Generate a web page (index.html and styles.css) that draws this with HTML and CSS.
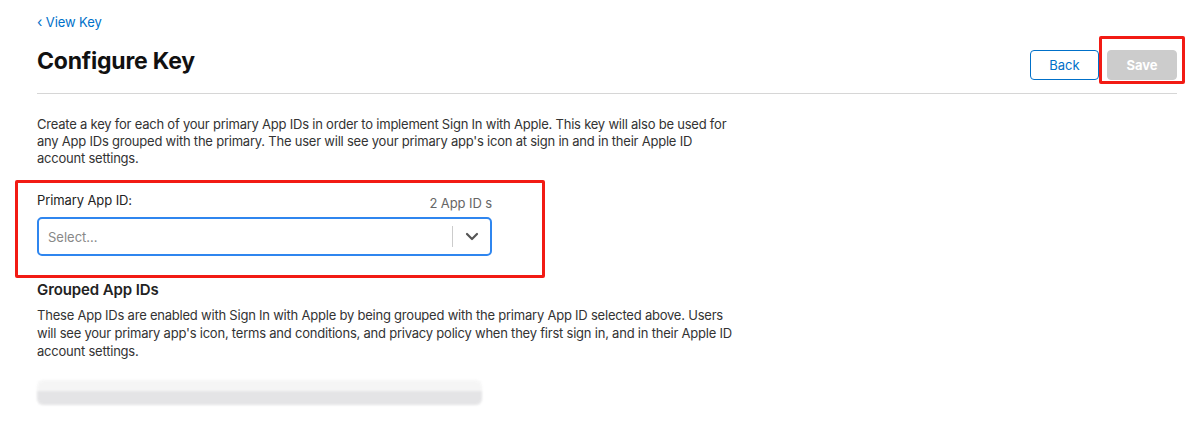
FILE: index.html
```html
<!DOCTYPE html>
<html lang="en">
<head>
<meta charset="utf-8">
<title>Configure Key</title>
<link rel="stylesheet" href="styles.css">
</head>
<body>
<div class="page">
  <a class="back-link" href="#"><span class="chev">‹</span> View Key</a>
  <header class="header">
    <h1 class="title">Configure Key</h1>
    <div class="actions">
      <button class="btn btn-back">Back</button>
      <button class="btn btn-save">Save</button>
    </div>
  </header>
  <p class="desc">Create a key for each of your primary App IDs in order to implement Sign In with Apple. This key will also be used for any App IDs grouped with the primary. The user will see your primary app's icon at sign in and in their Apple ID account settings.</p>
  <section class="field">
    <div class="field-head">
      <span class="field-label">Primary App ID:</span>
      <span class="field-count">2 App ID s</span>
    </div>
    <div class="select">
      <span class="placeholder">Select...</span>
      <span class="sep"></span>
      <svg class="caret" width="14" height="9" viewBox="0 0 14 9"><path d="M2 2 L7 7 L12 2" fill="none" stroke="#555" stroke-width="2.2" stroke-linecap="round" stroke-linejoin="round"/></svg>
    </div>
  </section>
  <h2 class="sub">Grouped App IDs</h2>
  <p class="desc desc2">These App IDs are enabled with Sign In with Apple by being grouped with the primary App ID selected above. Users will see your primary app's icon, terms and conditions, and privacy policy when they first sign in, and in their Apple ID account settings.</p>
  <div class="blurred"></div>

  <div class="mark mark-save"></div>
  <div class="mark mark-field"></div>
</div>
</body>
</html>
```

FILE: styles.css
```css
* { box-sizing: border-box; }
html, body { margin: 0; padding: 0; background: #fff; }
body {
  font-family: Inter, "Liberation Sans", Arial, sans-serif;
  color: #333;
}
.page {
  position: relative;
  padding: 13px 13px 0 37px;
  width: 1190px;
  height: 448px;
}
.back-link {
  display: block;
  font-size: 13px;
  line-height: 18px;
  color: #0070c9;
  text-decoration: none;
  letter-spacing: -0.1px;
}
.chev { font-size: 14px; }
.header {
  display: flex;
  justify-content: space-between;
  align-items: flex-start;
  padding-top: 16px;
  height: 63px;
  border-bottom: 1px solid #d6d6d6;
}
.title {
  margin: 0;
  font-size: 23px;
  line-height: 28px;
  font-weight: 700;
  color: #111;
  letter-spacing: -0.2px;
}
.actions {
  display: flex;
  gap: 8px;
  padding-top: 3px;
}
.btn {
  font-family: inherit;
  font-size: 13px;
  width: 70px;
  height: 30px;
  border-radius: 4px;
  cursor: pointer;
}
.btn-back {
  background: #fff;
  border: 1px solid #0070c9;
  color: #0070c9;
  width: 69px;
}
.btn-save {
  background: #cccccc;
  border: 1px solid #cccccc;
  color: #fff;
  font-weight: 700;
}
.desc {
  margin: 22px 0 0;
  width: 705px;
  font-size: 13px;
  line-height: 17px;
  letter-spacing: -0.22px;
  color: #333;
}
.field {
  margin-top: 24px;
  width: 455px;
}
.field-head {
  display: flex;
  justify-content: space-between;
  align-items: flex-end;
  font-size: 13px;
  line-height: 18px;
  letter-spacing: -0.1px;
}
.field-label { color: #222; }
.field-count { color: #666; position: relative; top: 3px; }
.select {
  margin-top: 8px;
  height: 39px;
  border: 2px solid #2f86ef;
  border-radius: 5px;
  display: flex;
  align-items: center;
  padding-left: 9px;
}
.placeholder {
  flex: 1;
  font-size: 13px;
  color: #888;
}
.sep {
  width: 1px;
  height: 21px;
  background: #ccc;
}
.caret { margin: 0 11px 0 12px; }
.sub {
  margin: 24px 0 0;
  font-size: 15px;
  line-height: 20px;
  font-weight: 600;
  color: #222;
  letter-spacing: -0.1px;
}
.desc2 { margin-top: 6px; line-height: 18px; }
.blurred {
  margin-top: 20px;
  width: 445px;
  height: 25px;
  border-radius: 6px;
  background: linear-gradient(180deg, #f5f5f5 0 45%, #e2e2e4 45% 100%);
  filter: blur(1px);
  opacity: 0.9;
}
.mark {
  position: absolute;
  border: 3px solid #f21b14;
  border-radius: 2px;
  pointer-events: none;
}
.mark-save { left: 1099px; top: 36px; width: 86px; height: 48px; }
.mark-field { left: 15px; top: 180px; width: 530px; height: 98px; }
```
